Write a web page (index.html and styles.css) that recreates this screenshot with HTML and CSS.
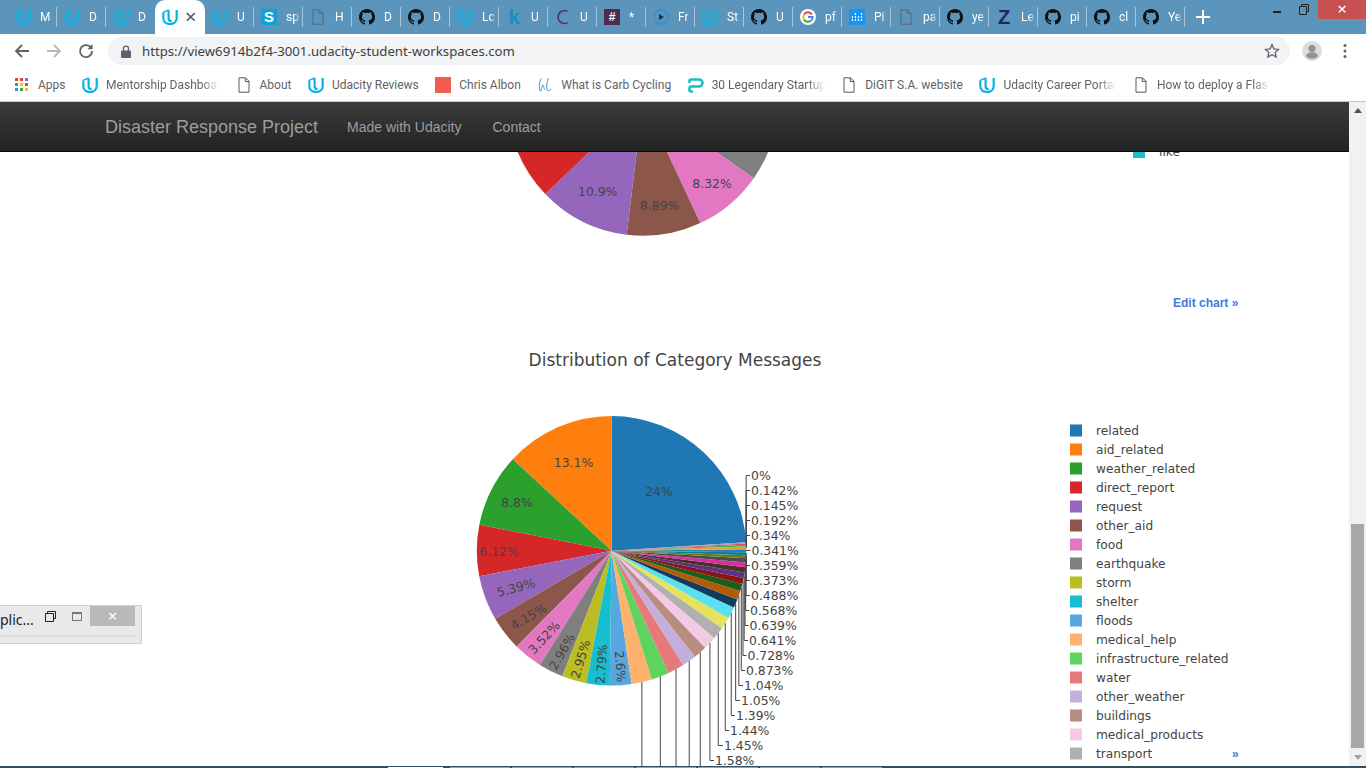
FILE: index.html
```html
<!DOCTYPE html>
<html lang="en">

<head>
    <meta charset="UTF-8">
    <title>Disaster Response Project</title>
    <link rel="stylesheet" href="styles.css">
</head>

<body>
    <svg class="icon-defs" width="0" height="0">
        <symbol id="i-udacity" viewBox="0 0 16 16">
            <path d="M1.300 3.400V9c0 3.800 2.900 6 6.700 6s6.700-2.200 6.700-6V1" fill="none" stroke="currentColor" stroke-width="2.200" />
            <path d="M6.600 1.300v8c0 1.800 1 2.900 3 2.900" fill="none" stroke="currentColor" stroke-width="2.200" />
            <path d="M1 3.300L6.800 1" fill="none" stroke="currentColor" stroke-width="1.400" />
        </symbol>
        <symbol id="i-github" viewBox="0 0 16 16">
            <path fill="#111" d="M8 0C3.58 0 0 3.58 0 8c0 3.54 2.29 6.53 5.47 7.59.4.07.55-.17.55-.38 0-.19-.01-.82-.01-1.49-2.01.37-2.53-.49-2.69-.94-.09-.23-.48-.94-.82-1.13-.28-.15-.68-.52-.01-.53.63-.01 1.08.58 1.23.82.72 1.21 1.87.87 2.33.66.07-.52.28-.87.51-1.07-1.78-.2-3.64-.89-3.64-3.95 0-.87.31-1.59.82-2.15-.08-.2-.36-1.02.08-2.12 0 0 .67-.21 2.2.82.64-.18 1.32-.27 2-.27.68 0 1.36.09 2 .27 1.53-1.04 2.2-.82 2.2-.82.44 1.1.12 1.92.08 2.12.51.56.82 1.27.82 2.15 0 3.07-1.87 3.75-3.65 3.95.29.25.54.73.54 1.48 0 1.07-.01 1.93-.01 2.2 0 .21.15.46.55.38A8.013 8.013 0 0016 8c0-4.42-3.58-8-8-8z" />
        </symbol>
        <symbol id="i-doc" viewBox="0 0 16 16">
            <path d="M3 .8h6.500L13 4.300v10.900H3zM9.300 1v3.500H13" fill="none" stroke="currentColor" stroke-width="1" />
        </symbol>
        <symbol id="i-google" viewBox="0 0 16 16">
            <circle cx="8" cy="8" r="8" fill="#fff" />
            <path d="M12 5.400A4.800 4.800 0 0 0 3.900 5.600" fill="none" stroke="#ea4335" stroke-width="1.900" />
            <path d="M3.900 5.600a4.800 4.800 0 0 0 0 4.800" fill="none" stroke="#fbbc05" stroke-width="1.900" />
            <path d="M3.900 10.400A4.800 4.800 0 0 0 11.400 11.400" fill="none" stroke="#34a853" stroke-width="1.900" />
            <path d="M8 8h4.700a4.800 4.800 0 0 1-1.300 3.400" fill="none" stroke="#4285f4" stroke-width="1.900" />
        </symbol>
    </svg>

    <div class="tabstrip">
        <div class="tabs">
            <div class="tab"><svg class="fav fav-blue"><use href="#i-udacity" /></svg><span class="tab-name">M</span></div>
            <div class="tab"><svg class="fav fav-blue"><use href="#i-udacity" /></svg><span class="tab-name">D</span></div>
            <div class="tab tab-before-active"><svg class="fav fav-blue"><use href="#i-udacity" /></svg><span class="tab-name">D</span></div>
            <div class="tab tab-active"><svg class="fav fav-blue"><use href="#i-udacity" /></svg><span class="tab-close">×</span></div>
            <div class="tab"><svg class="fav fav-blue"><use href="#i-udacity" /></svg><span class="tab-name">U</span></div>
            <div class="tab"><span class="fav fav-letter fav-s">S</span><span class="tab-name">sp</span></div>
            <div class="tab"><svg class="fav fav-doc"><use href="#i-doc" /></svg><span class="tab-name">H</span></div>
            <div class="tab"><svg class="fav"><use href="#i-github" /></svg><span class="tab-name">D</span></div>
            <div class="tab"><svg class="fav"><use href="#i-github" /></svg><span class="tab-name">D</span></div>
            <div class="tab"><svg class="fav fav-blue"><use href="#i-udacity" /></svg><span class="tab-name">Lc</span></div>
            <div class="tab"><span class="fav fav-letter fav-k">k</span><span class="tab-name">U</span></div>
            <div class="tab">
                <svg class="fav" viewBox="0 0 16 16"><path d="M12.500 2.200A6.500 6.500 0 1 0 12.500 13.800" fill="none" stroke="#4a3a6e" stroke-width="1.600" /></svg>
                <span class="tab-name">U</span>
            </div>
            <div class="tab"><span class="fav fav-letter fav-hash">#</span><span class="tab-name">*</span></div>
            <div class="tab">
                <svg class="fav" viewBox="0 0 16 16">
                    <circle cx="8" cy="8" r="7" fill="none" stroke="#3f8fcb" stroke-width="2" />
                    <path d="M6 5l5 3-5 3z" fill="#1c2f45" />
                </svg>
                <span class="tab-name">Fr</span>
            </div>
            <div class="tab"><svg class="fav fav-blue"><use href="#i-udacity" /></svg><span class="tab-name">St</span></div>
            <div class="tab"><svg class="fav"><use href="#i-github" /></svg><span class="tab-name">U</span></div>
            <div class="tab"><svg class="fav"><use href="#i-google" /></svg><span class="tab-name">pf</span></div>
            <div class="tab">
                <svg class="fav" viewBox="0 0 16 16">
                    <rect width="16" height="16" fill="#1a94f0" />
                    <path d="M3.500 7v6M6.500 4v9M9.500 7v6M12.500 4v9" stroke="#fff" stroke-width="1.200" stroke-dasharray="2 1" />
                </svg>
                <span class="tab-name">Pi</span>
            </div>
            <div class="tab"><svg class="fav fav-doc"><use href="#i-doc" /></svg><span class="tab-name">pa</span></div>
            <div class="tab"><svg class="fav"><use href="#i-github" /></svg><span class="tab-name">ye</span></div>
            <div class="tab"><span class="fav fav-letter fav-z">Z</span><span class="tab-name">Le</span></div>
            <div class="tab"><svg class="fav"><use href="#i-github" /></svg><span class="tab-name">pi</span></div>
            <div class="tab"><svg class="fav"><use href="#i-github" /></svg><span class="tab-name">cl</span></div>
            <div class="tab"><svg class="fav"><use href="#i-github" /></svg><span class="tab-name">Ye</span></div>
        </div>
        <svg class="new-tab" viewBox="0 0 14 14"><path d="M7 0v14M0 7h14" stroke="#fff" stroke-width="2" /></svg>
        <div class="win-controls">
            <span class="win-min"></span>
            <svg class="win-restore" viewBox="0 0 10 11">
                <path d="M2.500 2.500V.5h7v7h-2M.5 2.500h7v8h-7z" fill="none" stroke="#222" stroke-width="1" />
            </svg>
            <span class="win-close">×</span>
        </div>
    </div>

    <div class="toolbar">
        <svg class="tool-icon" viewBox="0 0 16 16"><path d="M15 8H2M8 2L2 8l6 6" fill="none" stroke="#5f6368" stroke-width="1.800" /></svg>
        <svg class="tool-icon" viewBox="0 0 16 16"><path d="M1 8h13M8 2l6 6-6 6" fill="none" stroke="#b5b7ba" stroke-width="1.800" /></svg>
        <svg class="tool-icon" viewBox="0 0 16 16">
            <path d="M13.300 5.300A6 6 0 1 0 14 8" fill="none" stroke="#5f6368" stroke-width="1.800" />
            <path d="M14.500 1v5.200H9.300z" fill="#5f6368" />
        </svg>
        <div class="omnibox">
            <svg class="lock" viewBox="0 0 10 13">
                <path d="M2.500 6V3.600a2.500 2.500 0 0 1 5 0V6" fill="none" stroke="#5f6368" stroke-width="1.300" />
                <rect y="5.500" width="10" height="7.500" rx="1" fill="#5f6368" />
            </svg>
            <span class="url">https://view6914b2f4-3001.udacity-student-workspaces.com</span>
            <svg class="star" viewBox="0 0 16 16">
                <path d="M8 1.600l1.900 4.300 4.700.5-3.500 3.100 1 4.600L8 11.800l-4.100 2.300 1-4.600L1.400 6.400l4.700-.5z" fill="none" stroke="#5f6368" stroke-width="1.300" />
            </svg>
        </div>
        <svg class="avatar" viewBox="0 0 20 20">
            <circle cx="10" cy="10" r="10" fill="#dcdde0" />
            <circle cx="10" cy="7.500" r="3.500" fill="#8f9296" />
            <ellipse cx="10" cy="14.500" rx="6" ry="3.200" fill="#8f9296" />
        </svg>
        <svg class="menu-dots" viewBox="0 0 4 16">
            <circle cx="2" cy="2.500" r="1.500" fill="#5f6368" />
            <circle cx="2" cy="8" r="1.500" fill="#5f6368" />
            <circle cx="2" cy="13.500" r="1.500" fill="#5f6368" />
        </svg>
    </div>

    <div class="bookmarks">
        <div class="bm bm-apps">
            <svg class="bm-icon" viewBox="0 0 13 13">
                <rect width="3" height="3" fill="#ea4335" /><rect x="5" width="3" height="3" fill="#ea4335" /><rect x="10" width="3" height="3" fill="#4285f4" />
                <rect y="5" width="3" height="3" fill="#34a853" /><rect x="5" y="5" width="3" height="3" fill="#fbbc05" /><rect x="10" y="5" width="3" height="3" fill="#ea4335" />
                <rect y="10" width="3" height="3" fill="#4285f4" /><rect x="5" y="10" width="3" height="3" fill="#34a853" /><rect x="10" y="10" width="3" height="3" fill="#fbbc05" />
            </svg>
            <span class="bm-name">Apps</span>
        </div>
        <div class="bm"><svg class="bm-icon fav-blue"><use href="#i-udacity" /></svg><span class="bm-name bm-cut">Mentorship Dashboard</span></div>
        <div class="bm"><svg class="bm-icon fav-doc-dark"><use href="#i-doc" /></svg><span class="bm-name">About</span></div>
        <div class="bm"><svg class="bm-icon fav-blue"><use href="#i-udacity" /></svg><span class="bm-name">Udacity Reviews</span></div>
        <div class="bm"><span class="bm-icon bm-red"></span><span class="bm-name">Chris Albon</span></div>
        <div class="bm">
            <svg class="bm-icon" viewBox="0 0 16 16">
                <path d="M4 1.500C2 6 2 11 3 14c1 1.500 2-4 2.500-6M5.500 8c1-1 1.500 5 2.500 5M11.500 1c-1.500 3-2.500 9-1.500 12 .5 1.500 2.500 1 4-1" fill="none" stroke="#3d9fc4" stroke-width="1" />
            </svg>
            <span class="bm-name">What is Carb Cycling</span>
        </div>
        <div class="bm">
            <svg class="bm-icon" viewBox="0 0 16 16">
                <path d="M5 14.500H3a1.500 1.500 0 0 1-1.500-1.500v-2A1.500 1.500 0 0 1 3 9.500h8A3.500 3.500 0 0 0 11 2.500H3A1.500 1.500 0 0 0 1.500 4v2" fill="none" stroke="#1ebcc4" stroke-width="2.600" />
            </svg>
            <span class="bm-name bm-cut">30 Legendary Startups</span>
        </div>
        <div class="bm"><svg class="bm-icon fav-doc-dark"><use href="#i-doc" /></svg><span class="bm-name">DiGIT S.A. website</span></div>
        <div class="bm"><svg class="bm-icon fav-blue"><use href="#i-udacity" /></svg><span class="bm-name bm-cut">Udacity Career Portal</span></div>
        <div class="bm"><svg class="bm-icon fav-doc-dark"><use href="#i-doc" /></svg><span class="bm-name bm-cut">How to deploy a Flask</span></div>
    </div>

    <div class="content">
        <div class="main">
            <nav class="navbar">
                <a class="brand">Disaster Response Project</a>
                <a class="nav-link">Made with Udacity</a>
                <a class="nav-link">Contact</a>
            </nav>

            <svg id="chart-top" class="chart chart-top" viewBox="0 152 1349 180"></svg>
            <svg id="chart-bottom" class="chart chart-bottom" viewBox="0 332 1349 434"></svg>

            <!-- window of another app, sits over the page -->
            <div class="float-win">
                <span class="float-title">plic...</span>
                <svg class="float-restore" viewBox="0 0 11 11">
                    <path d="M2.500 2.500V.5h8v7h-2.500M.5 2.500h8v8h-8z" fill="none" stroke="#222" stroke-width="1" />
                </svg>
                <span class="float-max"></span>
                <span class="float-close">×</span>
                <span class="float-line"></span>
            </div>
        </div>

        <div class="scrollbar">
            <span class="arrow-up"></span>
            <span class="thumb"></span>
            <span class="arrow-down"></span>
        </div>
    </div>

    <div class="taskbar">
        <span class="task task-on"></span>
        <span class="task"></span>
        <span class="task"></span>
        <span class="task"></span>
        <span class="task"></span>
        <span class="task"></span>
        <span class="task"></span>
        <span class="task"></span>
    </div>

    <script src="charts.js"></script>
</body>

</html>
```

FILE: styles.css
```css
* {
    box-sizing: border-box;
}

html,
body {
    margin: 0;
    height: 768px;
    overflow: hidden;
}

body {
    display: flex;
    flex-direction: column;
    font-family: "Noto Sans", sans-serif;
    background-color: #fff;
}

.icon-defs {
    position: absolute;
}

/* tab strip */
.tabstrip {
    display: flex;
    height: 34px;
    padding-left: 8px;
    background-color: #5b95bc;
}

.tabs {
    display: flex;
}

.tab {
    display: flex;
    align-items: center;
    width: 49px;
    height: 34px;
    padding-left: 7px;
    position: relative;
}

.tab::after {
    content: "";
    position: absolute;
    right: 0;
    top: 7px;
    height: 20px;
    border-right: 1px solid rgba(255, 255, 255, 0.45);
}

.tab-before-active::after,
.tab-active::after {
    display: none;
}

.tab-active {
    background-color: #fff;
    border-radius: 10px 10px 0 0;
    width: 50px;
}

.fav {
    flex: none;
    width: 16px;
    height: 16px;
}

.fav-blue {
    color: #0ab2e2;
}

.fav-doc {
    color: #5c6670;
}

.fav-doc-dark {
    color: #55585c;
}

.fav-letter {
    display: block;
    text-align: center;
    font-family: "Liberation Sans", sans-serif;
    font-weight: bold;
    line-height: 16px;
}

.fav-s {
    background-color: #12a0d6;
    color: #fff;
    font-size: 15px;
}

.fav-k {
    color: #1a8dc4;
    font-size: 20px;
}

.fav-hash {
    background-color: #4b2e4f;
    color: #fff;
    font-size: 12px;
}

.fav-z {
    color: #1b2a55;
    font-size: 20px;
}

.tab-name {
    width: 15px;
    margin-left: 9px;
    overflow: hidden;
    white-space: nowrap;
    color: #fff;
    font-family: Roboto, sans-serif;
    font-size: 12px;
    -webkit-mask-image: linear-gradient(to right, #000 55%, transparent);
}

.tab-close {
    margin-left: 7px;
    color: #555;
    font-size: 20px;
    line-height: 16px;
}

.new-tab {
    width: 14px;
    height: 14px;
    margin: 10px 0 0 11px;
}

.win-controls {
    display: flex;
    margin-left: auto;
    align-items: flex-start;
}

.win-min {
    width: 8px;
    height: 2px;
    margin: 11px 18px 0 0;
    background-color: #222;
}

.win-restore {
    width: 10px;
    height: 11px;
    margin: 4px 9px 0 0;
}

.win-close {
    width: 48px;
    height: 19px;
    background-color: #c75050;
    color: #fff;
    font-size: 17px;
    line-height: 18px;
    text-align: center;
}

/* address bar */
.toolbar {
    display: flex;
    align-items: center;
    height: 34px;
    padding-left: 14px;
    background-color: #fff;
}

.tool-icon {
    width: 16px;
    height: 16px;
    margin-right: 16px;
}

.omnibox {
    display: flex;
    align-items: center;
    width: 1182px;
    height: 28px;
    margin-left: -2px;
    padding: 0 10px 0 13px;
    border-radius: 14px;
    background-color: #f1f3f4;
}

.lock {
    width: 10px;
    height: 13px;
    margin-right: 11px;
}

.url {
    font-size: 13.2px;
    color: #3c4043;
}

.star {
    width: 16px;
    height: 16px;
    margin-left: auto;
}

.avatar {
    width: 20px;
    height: 20px;
    margin-left: 12px;
}

.menu-dots {
    width: 4px;
    height: 16px;
    margin-left: 21px;
}

/* bookmarks */
.bookmarks {
    display: flex;
    align-items: center;
    gap: 16.5px;
    height: 34px;
    padding-left: 15px;
    background-color: #fff;
    border-bottom: 1px solid #c8c8c8;
}

.bm {
    display: flex;
    align-items: center;
    gap: 8px;
}

.bm-icon {
    display: block;
    flex: none;
    width: 16px;
    height: 16px;
}

.bm-apps {
    gap: 10px;
}

.bm-apps .bm-icon {
    width: 13px;
    height: 13px;
}

.bm-red {
    background-color: #f05d50;
}

.bm-name {
    font-family: Roboto, sans-serif;
    font-size: 12px;
    color: #5f6368;
    white-space: nowrap;
}

.bm-cut {
    width: 113px;
    overflow: hidden;
    -webkit-mask-image: linear-gradient(to right, #000 85%, transparent);
}

/* page */
.content {
    display: flex;
    flex: 1;
    min-height: 0;
}

.main {
    position: relative;
    flex: 1;
    min-width: 0;
    overflow: hidden;
}

.navbar {
    display: flex;
    align-items: center;
    gap: 29px;
    height: 50px;
    padding: 1px 0 0 105px;
    background-image: linear-gradient(to bottom, #3c3c3c, #222);
    border-bottom: 1px solid #080808;
    font-family: "Liberation Sans", sans-serif;
    color: #9d9d9d;
}

.brand {
    font-size: 18px;
}

.nav-link {
    font-size: 14px;
}

.nav-link + .nav-link {
    margin-left: 2px;
}

.chart {
    display: block;
    width: 1349px;
    font-family: "DejaVu Sans", sans-serif;
}

.chart-top {
    height: 180px;
}

.chart-bottom {
    height: 434px;
}

.chart text {
    fill: #444;
    font-size: 12.4px;
}

.chart .chart-title {
    font-size: 17px;
}

.chart .legend-text {
    font-size: 12.2px;
}

.chart .edit-link {
    fill: #447adb;
    font-family: "Liberation Sans", sans-serif;
    font-size: 12px;
    font-weight: bold;
}

.float-win {
    position: absolute;
    left: 0;
    top: 503px;
    width: 142px;
    height: 39px;
    background-color: #e9e9e9;
    border: 1px solid #d0d0d0;
    border-left: none;
}

.float-title {
    position: absolute;
    left: 0;
    top: 4px;
    font-size: 14px;
    color: #222;
}

.float-restore {
    position: absolute;
    left: 45px;
    top: 5px;
    width: 11px;
    height: 11px;
}

.float-max {
    position: absolute;
    left: 72px;
    top: 6px;
    width: 10px;
    height: 9px;
    border: 1px solid #777;
    border-top-width: 2px;
}

.float-close {
    position: absolute;
    left: 90px;
    top: 0;
    width: 45px;
    height: 20px;
    background-color: #b9b9b9;
    color: #fff;
    font-size: 17px;
    line-height: 19px;
    text-align: center;
}

.float-line {
    position: absolute;
    left: 0;
    top: 29px;
    width: 135px;
    height: 2px;
    background-color: #dcdcdc;
}

.scrollbar {
    display: flex;
    flex-direction: column;
    align-items: center;
    width: 17px;
    background-color: #f1f1f1;
}

.arrow-up {
    margin-top: 6px;
    border: 4px solid transparent;
    border-top: none;
    border-bottom: 5px solid #505050;
}

.thumb {
    width: 13px;
    height: 224px;
    margin-top: 411px;
    background-color: #a8a8a8;
}

.arrow-down {
    margin-top: 7px;
    border: 4px solid transparent;
    border-bottom: none;
    border-top: 5px solid #a3a3a3;
}

.taskbar {
    display: flex;
    align-items: flex-end;
    gap: 2px;
    height: 2px;
    padding-left: 388px;
    background-color: #2f4f63;
}

.task {
    width: 60px;
    height: 1px;
    background-color: #8fa5b3;
}

.task-on {
    width: 55px;
    margin-right: 5px;
    background-color: #fff;
}
```

FILE: charts.js
```js
const SVG_NS = "http://www.w3.org/2000/svg";

function add(svg, tag, attrs, text) {
    const el = document.createElementNS(SVG_NS, tag);
    for (const k in attrs) el.setAttribute(k, attrs[k]);
    if (text) el.textContent = text;
    svg.appendChild(el);
    return el;
}

// angle is degrees clockwise from 12 o'clock
function point(cx, cy, r, angle) {
    const a = angle * Math.PI / 180;
    return [cx + r * Math.sin(a), cy - r * Math.cos(a)];
}

function slice(svg, cx, cy, r, from, to, color) {
    const p1 = point(cx, cy, r, from);
    const p2 = point(cx, cy, r, to);
    const big = Math.abs(to - from) > 180 ? 1 : 0;
    const d = `M${cx} ${cy}L${p1[0]} ${p1[1]}A${r} ${r} 0 ${big} 0 ${p2[0]} ${p2[1]}Z`;
    add(svg, "path", { d: d, fill: color });
}

function label(svg, x, y, text, rotate) {
    const attrs = { x: x, y: y, "text-anchor": "middle", "dominant-baseline": "central" };
    if (rotate) attrs.transform = `rotate(${rotate} ${x} ${y})`;
    add(svg, "text", attrs, text);
}

// first chart, only the bottom of the pie is in view
const top_ = document.getElementById("chart-top");
const topPie = [
    [125, 90, "#7f7f7f"],
    [154.95, 125, "#e377c2"],
    [186.95, 154.95, "#8c564b"],
    [226.3, 186.95, "#9467bd"],
    [265, 226.3, "#d62728"]
];
topPie.forEach(s => slice(top_, 643, 100.6, 135.2, s[0], s[1], s[2]));
label(top_, 597.7, 191.5, "10.9%");
label(top_, 659.7, 205.5, "8.89%");
label(top_, 712, 183.5, "8.32%");
add(top_, "rect", { x: 1133, y: 146, width: 12, height: 12, fill: "#17becf" });
add(top_, "text", { x: 1159, y: 156, class: "legend-text" }, "like");
add(top_, "text", { x: 1173, y: 307, class: "edit-link" }, "Edit chart »");

// second chart
const chart = document.getElementById("chart-bottom");
const CX = 611.6, CY = 550.8, R = 134.8;

const slices = [
    [24, "#1f77b4"], [13.1, "#ff7f0e"], [8.8, "#2ca02c"], [6.12, "#d62728"],
    [5.39, "#9467bd"], [4.15, "#8c564b"], [3.52, "#e377c2"], [2.96, "#7f7f7f"],
    [2.95, "#bcbd22"], [2.79, "#17becf"], [2.6, "#57a7e0"], [2.45, "#ffb16e"],
    [2.12, "#5fd35f"], [1.97, "#e67a7a"], [1.7, "#c4aedb"], [1.6, "#b98c80"],
    [1.58, "#f4c9e6"], [1.45, "#b0b0b0"], [1.44, "#e4e25f"], [1.39, "#5be0ef"],
    [1.05, "#103c5e"], [1.04, "#b35a07"], [0.873, "#1a5e1a"], [0.728, "#8c1414"],
    [0.641, "#5c3480"], [0.639, "#4c2f29"], [0.568, "#d62fa0"], [0.488, "#4d4d4d"],
    [0.373, "#757515"], [0.359, "#0e8091"], [0.341, "#2a7fc0"], [0.34, "#f39a3c"],
    [0.192, "#43b543"], [0.145, "#de4a4a"], [0.142, "#a98bd0"], [0, "#a1766c"]
];

// outside labels: slice index, label x, label y
const outside = [
    [16, 715, 761], [17, 724, 746], [18, 730, 731], [19, 736, 716], [20, 741, 701],
    [21, 744, 686], [22, 746, 671], [23, 747.5, 656], [24, 749, 641], [25, 749.5, 626],
    [26, 750, 611], [27, 751, 596], [28, 751, 581], [29, 751, 566], [30, 751.5, 551],
    [31, 751, 536], [32, 751, 521], [33, 751, 506], [34, 751, 491], [35, 751, 476]
];

const names = [
    "related", "aid_related", "weather_related", "direct_report", "request", "other_aid",
    "food", "earthquake", "storm", "shelter", "floods", "medical_help",
    "infrastructure_related", "water", "other_weather", "buildings", "medical_products", "transport"
];

let angle = 86.4;
const mids = [];
slices.forEach(s => {
    const next = angle - s[0] * 3.6;
    slice(chart, CX, CY, R, angle, next, s[1]);
    mids.push(point(CX, CY, R, (angle + next) / 2));
    angle = next;
});

// leader lines for the slices whose labels are below the fold
for (let i = 11; i < 16; i++) {
    add(chart, "path", { d: `M${mids[i][0]} ${mids[i][1]}V770`, fill: "none", stroke: "#444" });
}
outside.forEach(o => {
    const m = mids[o[0]];
    const y = o[2] - 0.5;
    add(chart, "path", { d: `M${m[0]} ${m[1]}V${y}H${o[1] - 1}`, fill: "none", stroke: "#444" });
    add(chart, "text", { x: o[1], y: y, "dominant-baseline": "central" }, slices[o[0]][0] + "%");
});

label(chart, 659, 491.5, "24%");
label(chart, 573.5, 462.5, "13.1%");
label(chart, 517, 502.5, "8.8%");
label(chart, 499, 551, "6.12%");
label(chart, 516, 587.5, "5.39%", -15);
label(chart, 528.5, 616.5, "4.15%", -30);
label(chart, 544, 637.5, "3.52%", -47);
label(chart, 562, 651.5, "2.96%", -60);
label(chart, 580.5, 659, "2.95%", -73);
label(chart, 601.5, 664, "2.79%", -86);
label(chart, 620.5, 666.5, "2.6%", 85);

add(chart, "text", { x: 675, y: 360, "text-anchor": "middle", "dominant-baseline": "central", class: "chart-title" }, "Distribution of Category Messages");

names.forEach((name, i) => {
    const y = 430.5 + i * 19;
    add(chart, "rect", { x: 1070, y: y - 6, width: 12, height: 12, fill: slices[i][1] });
    add(chart, "text", { x: 1096, y: y, "dominant-baseline": "central", class: "legend-text" }, name);
});
add(chart, "text", { x: 1232, y: 758, class: "edit-link" }, "»");
```
